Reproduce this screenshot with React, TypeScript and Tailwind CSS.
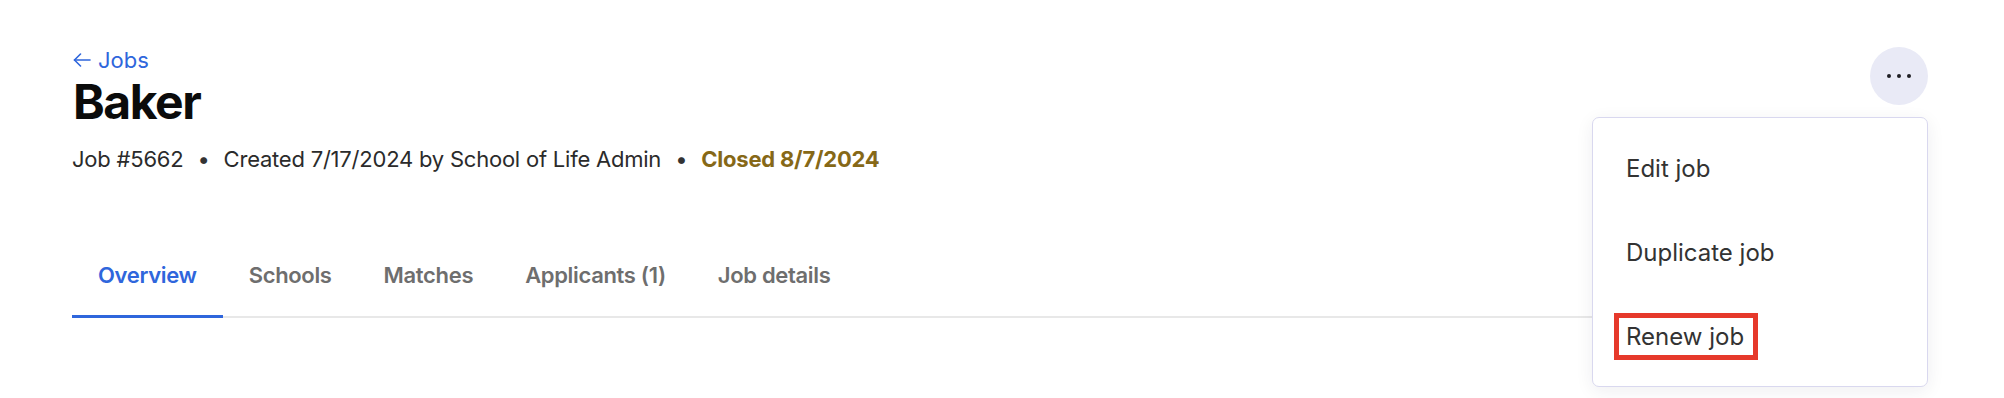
import React from 'react'

const tabs = ['Overview', 'Schools', 'Matches', 'Applicants (1)', 'Job details']

const menuItems = ['Edit job', 'Duplicate job', 'Renew job']

function BackArrow() {
  return (
    <svg width="18" height="14" viewBox="0 0 18 14" fill="none" stroke="currentColor" strokeWidth="1.6" strokeLinecap="round" strokeLinejoin="round">
      <path d="M17 7H1.5" />
      <path d="M7.5 1L1.5 7L7.5 13" />
    </svg>
  )
}

function MoreMenu() {
  return (
    <div className="relative">
      <button className="flex h-[58px] w-[58px] items-center justify-center rounded-full bg-[#e9eaf6]">
        <svg width="24" height="6" viewBox="0 0 24 6" fill="#1f1f24">
          <circle cx="2" cy="3" r="2" />
          <circle cx="12" cy="3" r="2" />
          <circle cx="22" cy="3" r="2" />
        </svg>
      </button>

      <div className="absolute right-0 top-[70px] z-10 w-[336px] rounded-[7px] border border-[#d9d8ef] bg-white py-[8px] shadow-[0_4px_18px_rgba(30,30,60,0.07)]">
        {menuItems.map((item) => (
          <div key={item} className="flex h-[84px] items-center pl-[33px] text-[24px] leading-[29px] text-[#333333]">
            {item === 'Renew job' ? (
              <span className="relative">
                {item}
                {/* annotation box */}
                <span className="pointer-events-none absolute -bottom-[9px] -left-[12px] -right-[14px] -top-[9px] border-[5px] border-[#e6392b]" />
              </span>
            ) : (
              item
            )}
          </div>
        ))}
      </div>
    </div>
  )
}

export default function App() {
  return (
    <div className="min-h-screen bg-white font-['Inter',sans-serif]">
      <div className="pl-[72px] pr-[76px] pt-[47px]">
        <div className="flex items-start justify-between">
          <div>
            <a href="#" className="flex items-center gap-[7px] pl-[1px] text-[22px] leading-[26px] text-[#2f66dc]">
              <BackArrow />
              Jobs
            </a>
            <h1 className="mt-[1px] pl-[1px] text-[48px] font-bold leading-[56px] tracking-[-0.03em] text-[#0b0b0b]">
              Baker
            </h1>
            <div className="mt-[16px] flex items-center text-[22px] leading-[26px] tracking-[-0.01em] text-[#2b2b2b]">
              <span>Job #5662</span>
              <span className="px-[14px] text-[#333333]">•</span>
              <span>Created 7/17/2024 by School of Life Admin</span>
              <span className="px-[14px] text-[#333333]">•</span>
              <span className="font-bold text-[#866817]">Closed 8/7/2024</span>
            </div>
          </div>

          <MoreMenu />
        </div>

        <nav className="mt-[90px] flex border-b-2 border-[#e8e8e8]">
          {tabs.map((tab, i) => {
            const active = i === 0
            return (
              <a
                key={tab}
                href="#"
                className={`-mb-[2px] border-b-[3px] px-[26px] pb-[27px] text-[22px] font-semibold leading-[26px] tracking-[-0.015em] ${
                  active ? 'border-[#2f66dc] text-[#2f66dc]' : 'border-transparent text-[#6e6e6e]'
                }`}
              >
                {tab}
              </a>
            )
          })}
        </nav>
      </div>
    </div>
  )
}
